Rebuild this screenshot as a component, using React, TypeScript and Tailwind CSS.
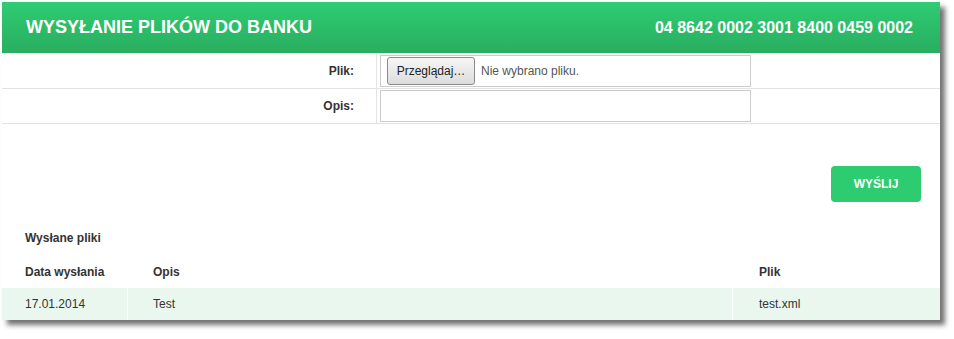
import React from "react";

export default function App() {
  return (
    <div className="w-[954px] h-[339px] bg-white pt-[2px] pl-[2px]" style={{ fontFamily: '"Liberation Sans", Arial, sans-serif' }}>
      <div className="w-[938px] bg-white shadow-[5px_5px_5px_rgba(0,0,0,0.55)] text-[#333] text-[12px]">
        <div className="h-[51px] flex items-center justify-between pl-[24px] pr-[27px] bg-gradient-to-b from-[#2fcc73] to-[#29ae5f] text-white font-bold">
          <span className="text-[18px]">WYSYŁANIE PLIKÓW DO BANKU</span>
          <span className="text-[16px]">04 8642 0002 3001 8400 0459 0002</span>
        </div>
        <div className="grid grid-cols-[375px_1fr] h-[36px] border-b border-[#e3e3e3]">
          <div className="border-r border-[#e3e3e3] flex items-center justify-end pr-[22px] font-bold">Plik:</div>
          <div className="flex items-center pl-[3px]">
            <div className="w-[371px] h-[32px] border border-[#cccccc] flex items-center pl-[6px]">
              <div className="h-[28px] w-[88px] rounded-[3px] border border-[#8a8a8a] bg-gradient-to-b from-[#f6f6f6] to-[#dcdcdc] flex items-center justify-center text-[12px] text-[#222]">Przeglądaj…</div>
              <span className="ml-[6px] text-[#555]">Nie wybrano pliku.</span>
            </div>
          </div>
        </div>
        <div className="grid grid-cols-[375px_1fr] h-[35px] border-b border-[#e3e3e3]">
          <div className="border-r border-[#e3e3e3] flex items-center justify-end pr-[22px] font-bold">Opis:</div>
          <div className="flex items-center pl-[3px]">
            <div className="w-[371px] h-[32px] border border-[#cccccc]"></div>
          </div>
        </div>
        <div className="flex justify-end pr-[19px] pt-[42px]">
          <div className="w-[90px] h-[36px] rounded-[4px] bg-[#2ecc71] text-white font-bold text-[12px] flex items-center justify-center">WYŚLIJ</div>
        </div>
        <div className="h-[36px] mt-[18px] flex items-center pl-[23px] font-bold">Wysłane pliki</div>
        <div className="grid grid-cols-[126px_605px_1fr] h-[32px] items-center font-bold">
          <div className="pl-[23px]">Data wysłania</div>
          <div className="pl-[25px]">Opis</div>
          <div className="pl-[26px]">Plik</div>
        </div>
        <div className="grid grid-cols-[126px_605px_1fr] h-[32px] bg-[#e9f7ef]">
          <div className="pl-[23px] flex items-center border-r border-white">17.01.2014</div>
          <div className="pl-[25px] flex items-center border-r border-white">Test</div>
          <div className="pl-[26px] flex items-center">test.xml</div>
        </div>
      </div>
    </div>
  );
}
